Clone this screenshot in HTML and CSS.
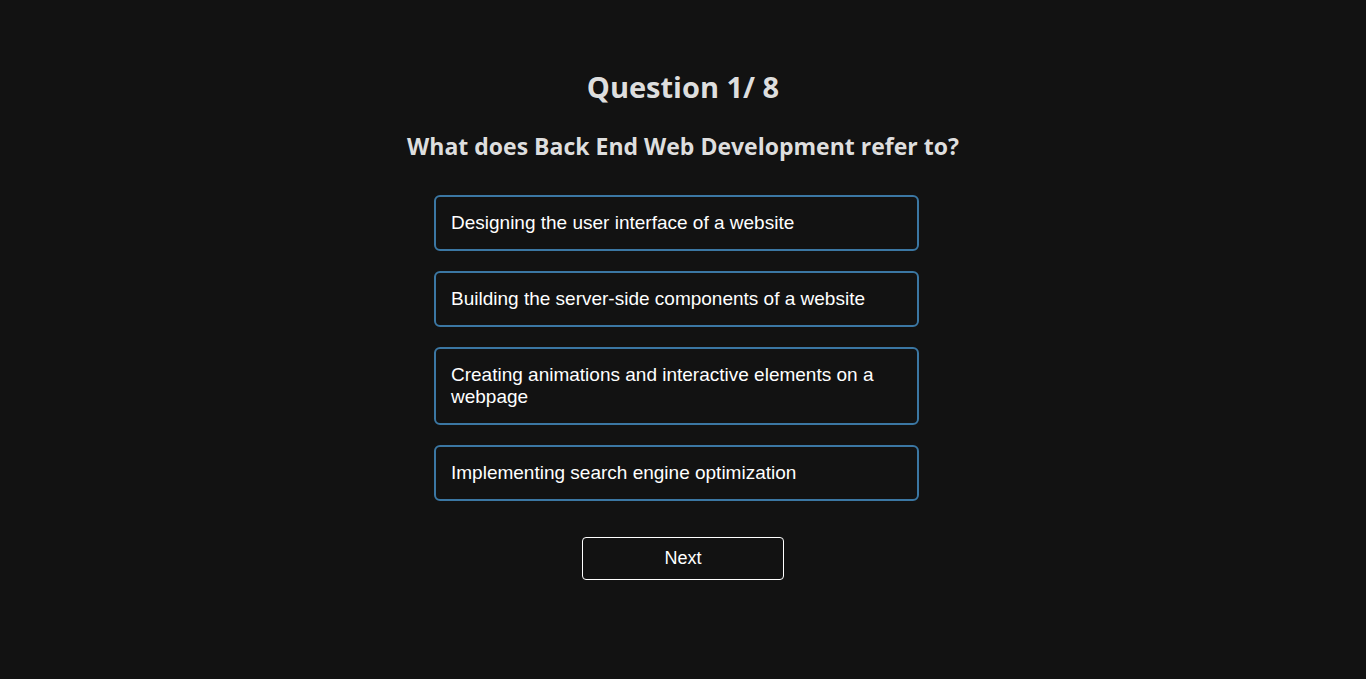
FILE: index.html
```html
<!DOCTYPE html>
<html>
<head>
<meta charset="utf-8">
<link rel="stylesheet" href="styles.css">
</head>
<body>
<main class="quiz">
  <h1 class="quiz-count">Question 1/ 8</h1>
  <h2 class="quiz-question">What does Back End Web Development refer to?</h2>
  <ul class="options">
    <li class="option">Designing the user interface of a website</li>
    <li class="option">Building the server-side components of a website</li>
    <li class="option">Creating animations and interactive elements on a webpage</li>
    <li class="option">Implementing search engine optimization</li>
  </ul>
  <button class="next-btn">Next</button>
</main>
</body>
</html>
```

FILE: styles.css
```css
html, body {
  margin: 0;
  padding: 0;
  background: #121212;
  height: 100%;
}
body {
  font-family: "Liberation Sans", Arial, sans-serif;
  color: #fff;
}
.quiz {
  width: 500px;
  margin: 0 auto;
  padding-top: 68px;
  display: flex;
  flex-direction: column;
  align-items: center;
}
.quiz-count {
  font-family: "Open Sans", "Noto Sans", sans-serif;
  font-weight: 700;
  font-size: 29px;
  line-height: 38px;
  color: #dedede;
  margin: 0;
}
.quiz-question {
  font-family: "Open Sans", "Noto Sans", sans-serif;
  font-weight: 700;
  font-size: 23px;
  line-height: 30px;
  color: #dedede;
  margin: 25px 0 0;
  white-space: nowrap;
}
.options {
  list-style: none;
  margin: 34px 0 0;
  padding: 0;
  width: 500px;
  display: flex;
  flex-direction: column;
  gap: 20px;
}
.option {
  width: 485px;
  box-sizing: border-box;
  margin-left: 1px;
  border: 2px solid #3b77a3;
  border-radius: 6px;
  padding: 15px 15px;
  font-size: 19px;
  line-height: 22px;
  color: #fff;
}
.next-btn {
  margin-top: 36px;
  width: 202px;
  height: 43px;
  background: transparent;
  border: 1px solid #fff;
  border-radius: 4px;
  color: #fff;
  font-family: "Liberation Sans", Arial, sans-serif;
  font-size: 18px;
}
```
